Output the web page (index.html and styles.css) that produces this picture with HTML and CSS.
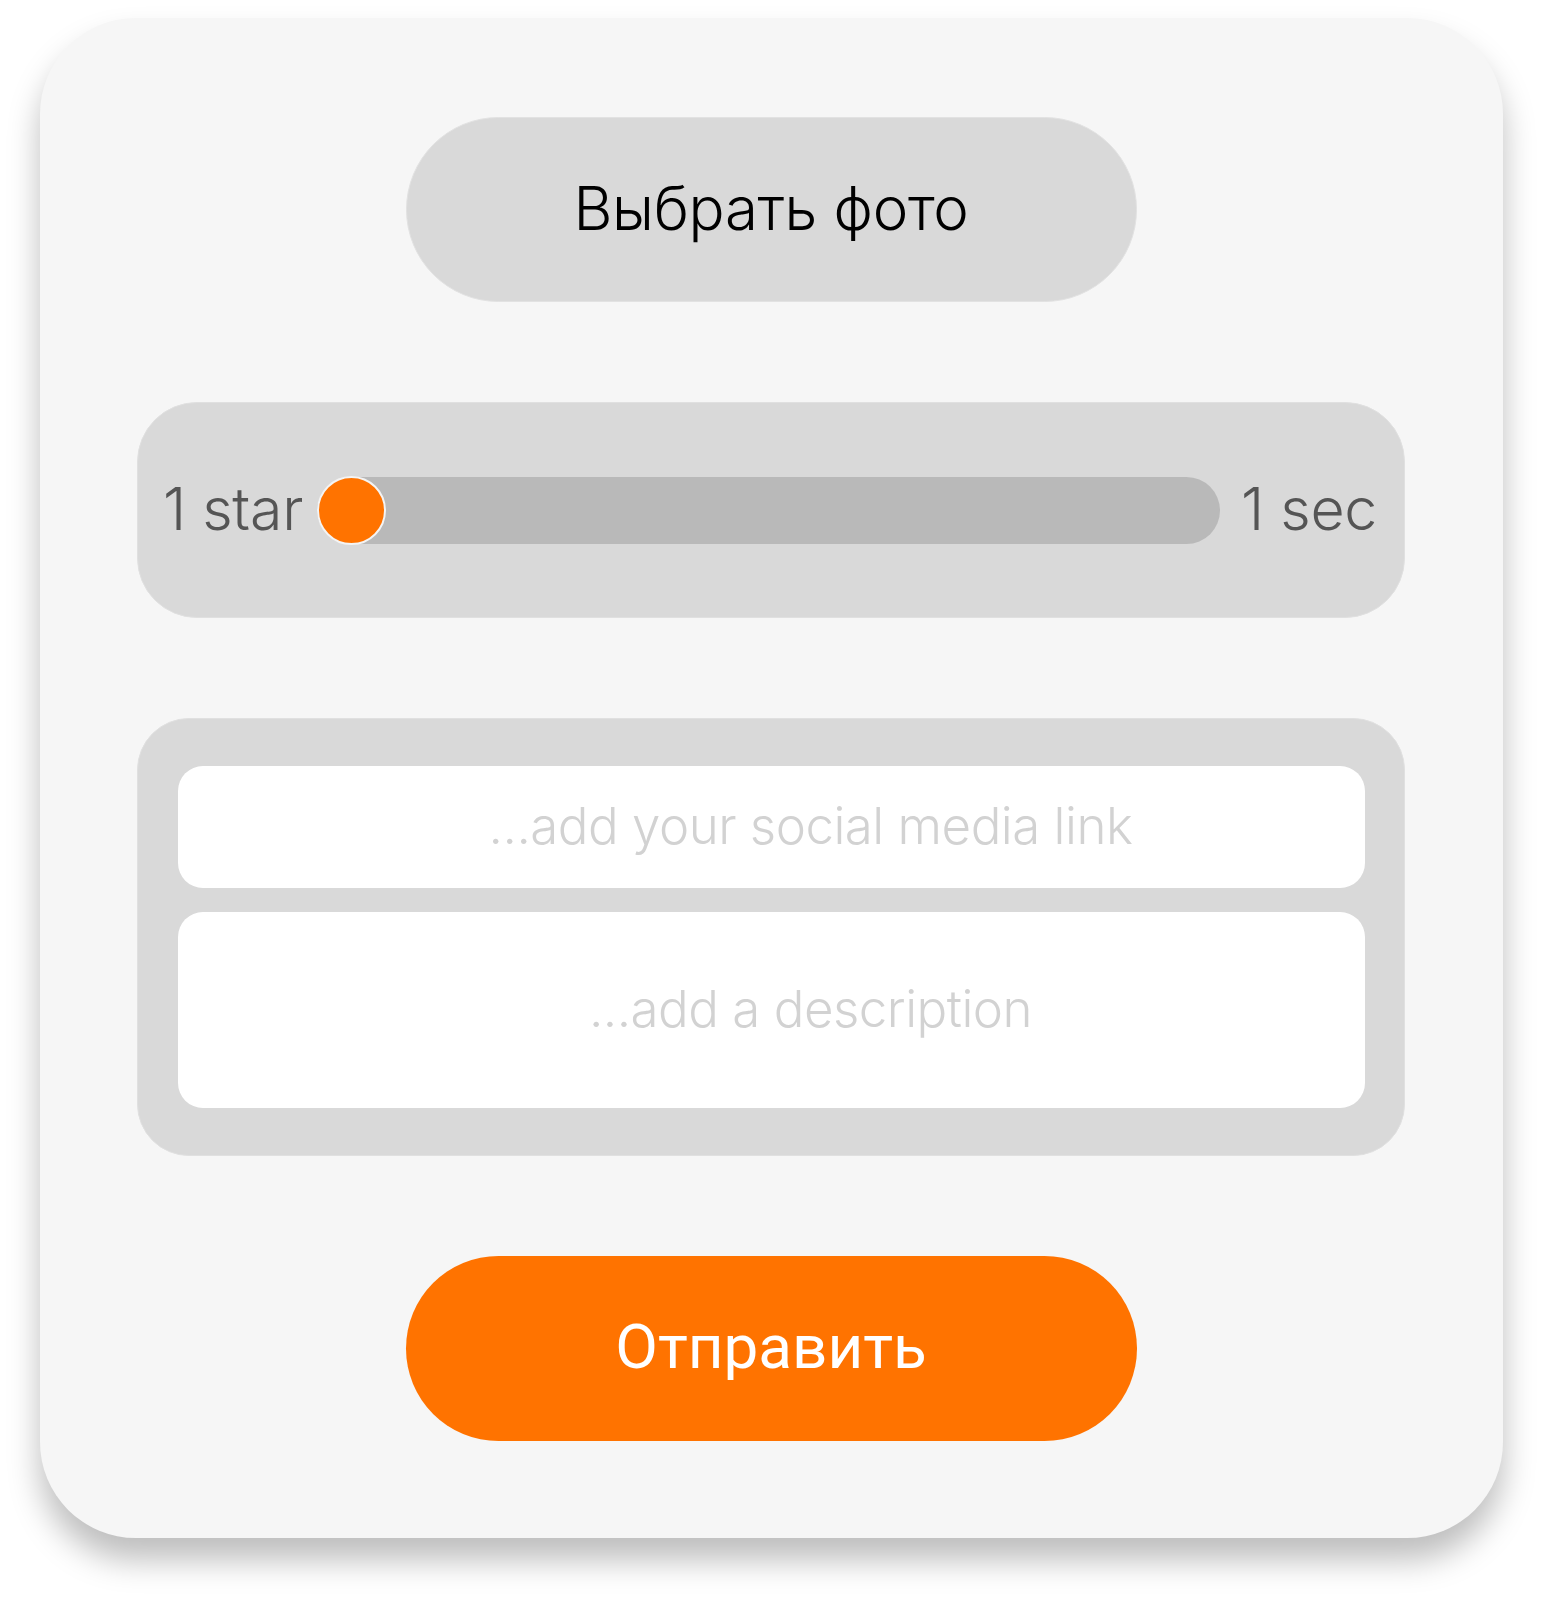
FILE: index.html
```html
<!DOCTYPE html>
<html lang="ru">
<head>
<meta charset="utf-8">
<title>Form</title>
<link rel="stylesheet" href="styles.css">
</head>
<body>
<div class="card">
  <div class="btn btn-photo">Выбрать фото</div>
  <div class="slider-panel">
    <span class="slider-label">1 star</span>
    <div class="track">
      <div class="thumb"></div>
    </div>
    <span class="slider-label">1 sec</span>
  </div>
  <div class="fields">
    <div class="field field-link"><span class="placeholder">...add your social media link</span></div>
    <div class="field field-desc"><span class="placeholder">...add a description</span></div>
  </div>
  <div class="btn btn-send">Отправить</div>
</div>
</body>
</html>
```
FILE: styles.css
```css
html, body {
  margin: 0;
  padding: 0;
  background: #ffffff;
}

body {
  padding: 18px 0 62px 40px;
  font-family: "Inter", "Liberation Sans", sans-serif;
}

.card {
  box-sizing: border-box;
  width: 1463px;
  height: 1520px;
  background: #f6f6f6;
  border-radius: 96px;
  box-shadow: 0 22px 32px rgba(0, 0, 0, 0.26);
  padding: 99px 98px 97px 97px;
  display: flex;
  flex-direction: column;
  align-items: center;
  gap: 100px;
}

.btn {
  box-sizing: border-box;
  width: 731px;
  height: 185px;
  border-radius: 93px;
  display: flex;
  align-items: center;
  justify-content: center;
  flex-shrink: 0;
}

.btn-photo {
  background: #d9d9d9;
  border: 1px solid #e2e2e2;
  color: #000;
  font-size: 60px;
  font-weight: 300;
  letter-spacing: -0.3px;
  padding-bottom: 4px;
}

.btn-send {
  background: #ff7300;
  color: #ffffff;
  font-family: "Roboto", "Liberation Sans", sans-serif;
  font-size: 62px;
  font-weight: 400;
  padding-bottom: 4px;
}

.slider-panel {
  box-sizing: border-box;
  align-self: stretch;
  height: 217px;
  background: #d9d9d9;
  border: 1px solid #e0e0e0;
  border-radius: 60px;
  display: flex;
  align-items: center;
  padding: 0 27px 0 25px;
}

.slider-label {
  color: #555555;
  font-size: 59px;
  font-weight: 300;
  letter-spacing: -0.3px;
  white-space: nowrap;
  padding-bottom: 4px;
}

.track {
  position: relative;
  flex: 1;
  height: 67px;
  background: #b9b9b9;
  border-radius: 34px;
  margin: 0 21px 0 14px;
}

.thumb {
  position: absolute;
  left: 0;
  top: -1px;
  width: 65px;
  height: 65px;
  border-radius: 50%;
  background: #ff7300;
  border: 2px solid #f4f4f4;
}

.fields {
  box-sizing: border-box;
  align-self: stretch;
  height: 438px;
  background: #d9d9d9;
  border: 1px solid #e0e0e0;
  border-radius: 52px;
  padding: 47px 39px 47px 40px;
  display: flex;
  flex-direction: column;
  gap: 24px;
}

.field {
  background: #ffffff;
  border-radius: 25px;
  display: flex;
  align-items: center;
  justify-content: center;
  padding-left: 78px;
}

.field-link {
  height: 122px;
}

.field-desc {
  height: 196px;
}

.placeholder {
  color: #d2d2d2;
  font-size: 51px;
  font-weight: 300;
  letter-spacing: -0.5px;
  white-space: nowrap;
  padding-bottom: 4px;
}
```
